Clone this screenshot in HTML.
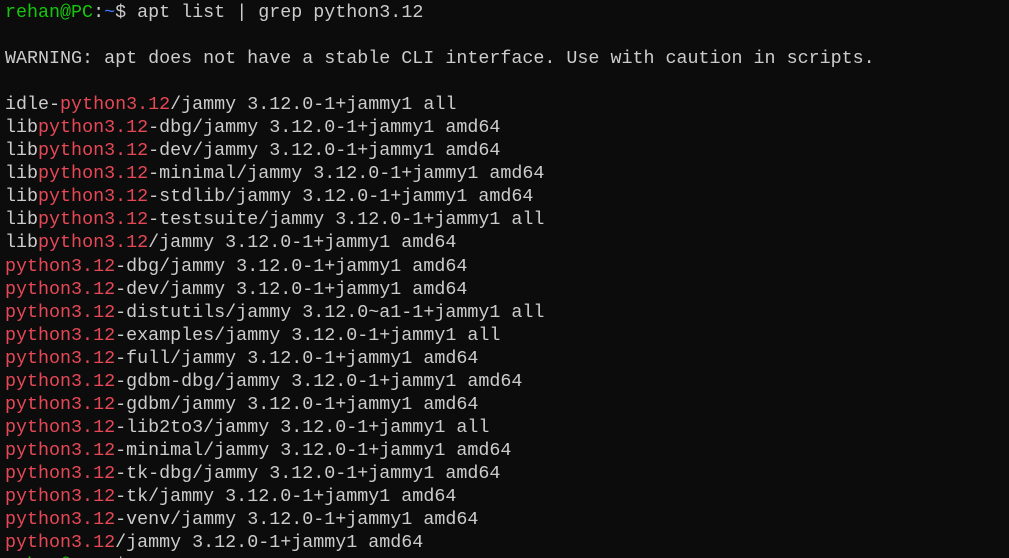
<!DOCTYPE html>
<html><head><meta charset="utf-8"><style>
html,body{margin:0;padding:0;background:#0c0c0c;width:1009px;height:558px;overflow:hidden}
pre{margin:0;padding:1px 0 0 5px;font-family:"Liberation Mono","DejaVu Sans Mono",monospace;font-size:18.35px;line-height:23.05px;color:#cccccc;white-space:pre}
.r{color:#e74856}.g{color:#16c60c}.b{color:#3b78ff}
</style></head><body><pre><span class="g">rehan@PC</span>:<span class="b">~</span>$ apt list | grep python3.12

WARNING: apt does not have a stable CLI interface. Use with caution in scripts.

idle-<span class="r">python3.12</span>/jammy 3.12.0-1+jammy1 all
lib<span class="r">python3.12</span>-dbg/jammy 3.12.0-1+jammy1 amd64
lib<span class="r">python3.12</span>-dev/jammy 3.12.0-1+jammy1 amd64
lib<span class="r">python3.12</span>-minimal/jammy 3.12.0-1+jammy1 amd64
lib<span class="r">python3.12</span>-stdlib/jammy 3.12.0-1+jammy1 amd64
lib<span class="r">python3.12</span>-testsuite/jammy 3.12.0-1+jammy1 all
lib<span class="r">python3.12</span>/jammy 3.12.0-1+jammy1 amd64
<span class="r">python3.12</span>-dbg/jammy 3.12.0-1+jammy1 amd64
<span class="r">python3.12</span>-dev/jammy 3.12.0-1+jammy1 amd64
<span class="r">python3.12</span>-distutils/jammy 3.12.0~a1-1+jammy1 all
<span class="r">python3.12</span>-examples/jammy 3.12.0-1+jammy1 all
<span class="r">python3.12</span>-full/jammy 3.12.0-1+jammy1 amd64
<span class="r">python3.12</span>-gdbm-dbg/jammy 3.12.0-1+jammy1 amd64
<span class="r">python3.12</span>-gdbm/jammy 3.12.0-1+jammy1 amd64
<span class="r">python3.12</span>-lib2to3/jammy 3.12.0-1+jammy1 all
<span class="r">python3.12</span>-minimal/jammy 3.12.0-1+jammy1 amd64
<span class="r">python3.12</span>-tk-dbg/jammy 3.12.0-1+jammy1 amd64
<span class="r">python3.12</span>-tk/jammy 3.12.0-1+jammy1 amd64
<span class="r">python3.12</span>-venv/jammy 3.12.0-1+jammy1 amd64
<span class="r">python3.12</span>/jammy 3.12.0-1+jammy1 amd64
<span class="g">rehan@PC</span>:<span class="b">~</span>$ </pre></body></html>
